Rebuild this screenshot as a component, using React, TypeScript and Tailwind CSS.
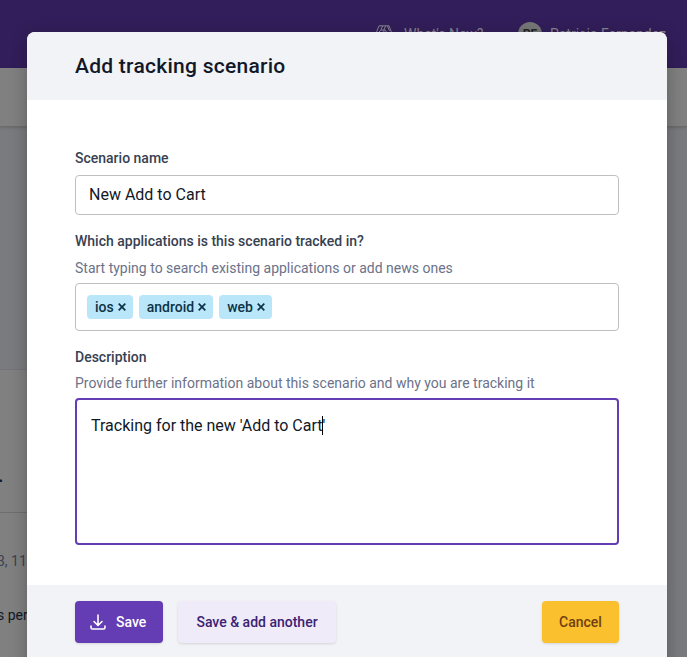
import type { ReactNode } from "react";

function Label({ children }: { children: ReactNode }) {
  return <label className="block text-sm leading-5 font-medium text-[#374151]">{children}</label>;
}

function Hint({ children }: { children: ReactNode }) {
  return <p className="text-sm leading-5 text-[#6b7289]">{children}</p>;
}

function Tag({ name }: { name: string }) {
  return (
    <span className="flex h-6 items-center gap-1 rounded bg-[#bae6fa] pr-[7px] pb-px pl-2 text-sm font-medium text-[#0c3347]">
      {name}
      <svg className="size-2" viewBox="0 0 8 8" fill="none" stroke="currentColor" strokeWidth="1.7">
        <path d="M.7.7l6.6 6.6M7.3.7L.7 7.3" />
      </svg>
    </span>
  );
}

function Page() {
  return (
    <div className="absolute inset-0 flex flex-col bg-[#797b7e]">
      <header className="flex h-[68px] shrink-0 items-center bg-[#321e5a] pl-[375px] text-sm text-[#87828f]">
        <svg className="mr-[11px] size-[18px]" viewBox="0 0 18 18" fill="none" stroke="currentColor" strokeWidth="1">
          <path d="M4 .8h10L17.2 9 14 17H4L.8 9zM7.5 1L6 5l-3 3M6 5h4l3 4M10.5 1L9 5l-1 7M12.5 1l2 5" />
        </svg>
        <span className="w-[114px]">What's New?</span>
        <span className="mr-2 flex size-6 items-center justify-center rounded-full bg-[#777] text-xs font-semibold text-[#222]">PF</span>
        <span className="whitespace-nowrap">Patricia Fernandez</span>
      </header>
      <div className="h-[59px] shrink-0 border-b border-[#6c6c6c] bg-[#808080] shadow" />
      <main className="mt-[242px] w-[640px] grow border-t border-[#727477] bg-[#808080]">
        <div className="h-[143px] border-b border-[#6d6f72] pt-[93px] text-xl leading-6 font-medium text-[#111827]">
          <span className="-ml-[2px]">.</span>
        </div>
        <p className="mt-[38px] -ml-[3px] text-sm leading-5 text-[#3b4250]">3, 11:20</p>
        <p className="mt-[34px] -ml-[3px] text-sm leading-5 text-[#111827]">s person</p>
      </main>
    </div>
  );
}

export default function App() {
  return (
    <div className="relative h-[657px] w-[687px] overflow-hidden font-['Roboto',sans-serif]">
      <Page />
      <div className="absolute top-8 left-[27px] flex h-[660px] w-[640px] flex-col overflow-hidden rounded-lg bg-white shadow-[0_20px_25px_-5px_rgba(0,0,0,0.2),0_0_16px_rgba(0,0,0,0.15)]">
        <header className="flex h-[68px] shrink-0 items-center bg-[#f2f3f7] px-12 pt-0.5">
          <h2 className="text-[21px] font-medium tracking-[0.26px] text-[#111827]">Add tracking scenario</h2>
        </header>
        <form className="flex h-[485px] shrink-0 flex-col px-12 pt-12">
          <Label>Scenario name</Label>
          <input
            className="mt-[7px] h-10 rounded border border-[#bfbfbf] px-[13px] pb-[2px] text-base text-[#111827]"
            defaultValue="New Add to Cart"
          />
          <div className="mt-4">
            <Label>Which applications is this scenario tracked in?</Label>
          </div>
          <div className="mt-[7px] mb-[5px]">
            <Hint>Start typing to search existing applications or add news ones</Hint>
          </div>
          <div className="flex h-12 items-center gap-1.5 rounded border border-[#bfbfbf] px-[11px]">
            <Tag name="ios" />
            <Tag name="android" />
            <Tag name="web" />
          </div>
          <div className="mt-4">
            <Label>Description</Label>
          </div>
          <div className="mt-[6px] mb-[5px]">
            <Hint>Provide further information about this scenario and why you are tracking it</Hint>
          </div>
          <div className="relative h-[147px] rounded border-2 border-[#643cb4] px-3.5 py-[14px] text-base leading-6 text-[#111827]">
            Tracking for the new 'Add to Cart'
            <span className="absolute top-4 left-[245px] h-[19px] w-px bg-black" />
          </div>
        </form>
        <footer className="flex grow items-start bg-[#f2f3f7] px-12 pt-4 text-sm font-medium">
          <button className="flex h-[42px] w-[88px] items-center rounded bg-[#643cb4] pl-[15px] text-white shadow-sm">
            <svg className="mr-[10px] size-4" viewBox="0 0 16 16" fill="none" stroke="currentColor" strokeWidth="1.6" strokeLinecap="round" strokeLinejoin="round">
              <path d="M8 1v10M4 7.5l4 4 4-4M1 12v1.5q0 1.5 1.5 1.5h11q1.5 0 1.5-1.5V12" />
            </svg>
            Save
          </button>
          <button className="ml-[15px] h-[42px] w-[158px] rounded bg-[#efebf8] text-[#3b2273] shadow-sm">Save &amp; add another</button>
          <button className="ml-auto h-[42px] w-[77px] rounded bg-[#fbc02d] text-[#713f12] shadow-sm">Cancel</button>
        </footer>
      </div>
    </div>
  );
}
